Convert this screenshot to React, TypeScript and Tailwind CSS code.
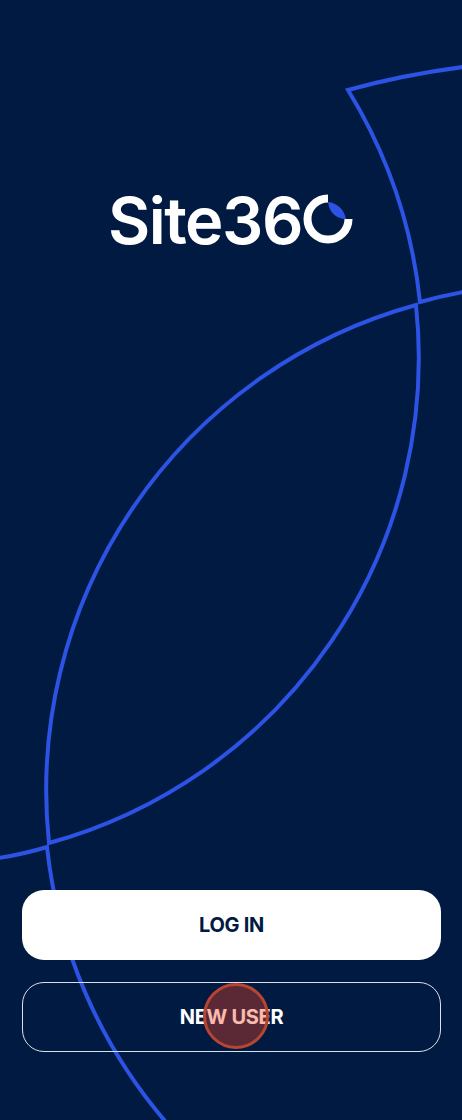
export default function App() {
  return (
    <div className="relative flex h-[1120px] w-[462px] flex-col overflow-hidden bg-[#001a41] font-['Inter','Liberation_Sans',sans-serif]">
      <svg className="absolute inset-0" width="462" height="1120" viewBox="0 0 462 1120" fill="none" stroke="#2c53e4" strokeWidth="4" strokeLinejoin="miter">
        <path d="M463 67 Q402 75 348 90 A 508 508 0 0 1 420 302 Q441 296 463 292" />
        <path d="M416 305 A 503 503 0 0 0 49 843 A 503 503 0 0 0 416 305 Z" />
        <path d="M-1 858 Q24 854 47 847 A 506 506 0 0 0 165 1121" />
      </svg>
      <div className="relative ml-[108px] mt-[180px] flex h-[80px] items-center">
        <span className="w-[195px] text-[65px] font-semibold leading-none tracking-[-1.5px] text-white">Site36</span>
        <svg className="-mt-[3px]" width="50" height="50" viewBox="0 0 50 50" fill="none">
          <path d="M45.5 25 A 20.5 20.5 0 1 1 25 4.5" stroke="#ffffff" strokeWidth="8" />
          <path d="M25 8 C 34 9 41 15 43 25 C 33 25 26 18 25 8 Z" fill="#2c53e4" />
        </svg>
      </div>
      <div className="relative mt-auto flex flex-col gap-[22px] pb-[68px] pl-[22px] pr-[21px]">
        <button className="flex h-[70px] items-center justify-center rounded-[22px] bg-white text-[20px] font-bold tracking-[-0.3px] text-[#001a41]">LOG IN</button>
        <button className="flex h-[70px] items-center justify-center rounded-[22px] border-[1.5px] border-[#dbe1e9] text-[20px] font-bold tracking-[-0.3px] text-white">NEW USER</button>
      </div>
      <div className="absolute left-[203px] top-[983px] h-[66px] w-[66px] rounded-full border-[3px] border-[#b8452f] bg-[#f84520]/37" />
    </div>
  );
}
